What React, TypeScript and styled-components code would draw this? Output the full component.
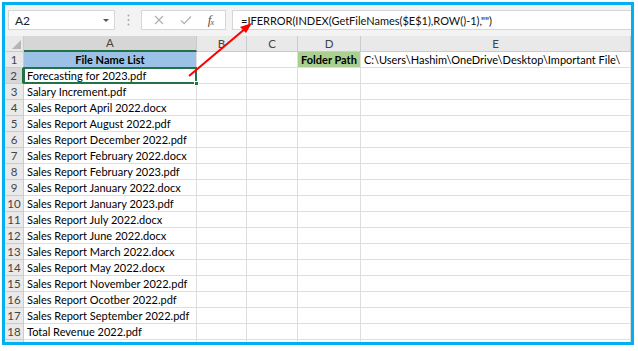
import React from "react";
import styled, { createGlobalStyle, css } from "styled-components";

const GlobalStyle = createGlobalStyle`
  html, body { margin: 0; padding: 0; background: #ffffff; }
  body { font-family: "Lato", "Liberation Sans", sans-serif; }
`;

const Frame = styled.div`
  position: relative;
  margin: 2px 0 0 2px;
  width: 632px;
  height: 343px;
  box-sizing: border-box;
  border: 3px solid #00b0f0;
  overflow: hidden;
  display: flex;
  flex-direction: column;
  background: #ffffff;
`;

const Toolbar = styled.div`
  height: 31px;
  flex: none;
  box-sizing: border-box;
  padding: 5px 0 0 3px;
  display: flex;
  align-items: flex-start;
  background: #f3f3f3;
`;

const Box = styled.div`
  height: 20px;
  box-sizing: border-box;
  background: #ffffff;
  border: 1px solid #d6d6d6;
  display: flex;
  align-items: center;
`;

const NameBox = styled(Box)`
  width: 107px;
  padding: 0 5px 0 6px;
  justify-content: space-between;
  font-size: 12px;
  color: #222;
`;

const Caret = styled.span`
  width: 0;
  height: 0;
  border-left: 3px solid transparent;
  border-right: 3px solid transparent;
  border-top: 3px solid #555;
`;

const Grip = styled.div`
  width: 26px;
  height: 20px;
  display: flex;
  align-items: center;
  justify-content: center;
`;

const ButtonsBox = styled(Box)`
  width: 85px;
  justify-content: space-around;
  padding: 0 4px;
`;

const Fx = styled.span`
  font-family: "Liberation Serif", serif;
  font-style: italic;
  font-size: 13px;
  color: #555;
  letter-spacing: -1px;
  sub {
    font-size: 8px;
    vertical-align: -1px;
  }
`;

const FormulaBox = styled(Box)`
  flex: 1;
  margin-left: 6px;
  padding-left: 8px;
  border-right: none;
  font-family: "Lato", "Liberation Sans", sans-serif;
  font-size: 11px;
  color: #111;
`;

const Sheet = styled.div`
  flex: 1;
  overflow: hidden;
  display: grid;
  grid-template-columns: 19px 173px 50px 51px 63px 270px;
  grid-auto-rows: 16px;
`;

type CellProps = {
  $kind?: "corner" | "colhead" | "rowhead" | "data";
  $active?: boolean;
  $fill?: string;
  $bold?: boolean;
  $center?: boolean;
  $selected?: boolean;
};

const Cell = styled.div<CellProps>`
  position: relative;
  box-sizing: border-box;
  border-right: 1px solid #dedede;
  border-bottom: 1px solid #dedede;
  font-size: 11px;
  line-height: 15px;
  color: #000;
  white-space: nowrap;
  overflow: visible;
  padding: 0 3px;
  background: ${(p) => p.$fill || "transparent"};
  font-weight: ${(p) => (p.$bold ? 700 : 400)};
  text-align: ${(p) => (p.$center ? "center" : "left")};

  ${(p) =>
    (p.$kind === "colhead" || p.$kind === "rowhead" || p.$kind === "corner") &&
    css`
      background: ${p.$active ? "#d6d6d6" : "#e9e9e9"};
      border-right-color: #cbcbcb;
      border-bottom-color: #cbcbcb;
      color: #444;
      text-align: center;
      padding: 0;
      font-size: 11.5px;
    `}

  ${(p) =>
    p.$kind === "colhead" &&
    p.$active &&
    css`
      border-bottom: 2px solid #217346;
      line-height: 14px;
    `}

  ${(p) =>
    p.$kind === "rowhead" &&
    p.$active &&
    css`
      border-right: 2px solid #217346;
    `}

  ${(p) =>
    p.$selected &&
    css`
      z-index: 2;
      &::after {
        content: "";
        position: absolute;
        left: -1px;
        top: -1px;
        right: -1px;
        bottom: -1px;
        border: 2px solid #217346;
        pointer-events: none;
      }
      &::before {
        content: "";
        position: absolute;
        right: -3px;
        bottom: -3px;
        width: 5px;
        height: 5px;
        background: #217346;
        border: 1px solid #fff;
        box-sizing: border-box;
        z-index: 3;
      }
    `}
`;

const CornerMark = styled.span`
  position: absolute;
  right: 2px;
  bottom: 2px;
  width: 0;
  height: 0;
  border-left: 9px solid transparent;
  border-bottom: 9px solid #b5b5b5;
`;

const Overlay = styled.svg`
  position: absolute;
  left: 0;
  top: 0;
  width: 100%;
  height: 100%;
  pointer-events: none;
  z-index: 10;
`;

const files = [
  "Forecasting for 2023.pdf",
  "Salary Increment.pdf",
  "Sales Report April 2022.docx",
  "Sales Report August 2022.pdf",
  "Sales Report December 2022.pdf",
  "Sales Report February 2022.docx",
  "Sales Report February 2023.pdf",
  "Sales Report January 2022.docx",
  "Sales Report January 2023.pdf",
  "Sales Report July 2022.docx",
  "Sales Report June 2022.docx",
  "Sales Report March 2022.docx",
  "Sales Report May 2022.docx",
  "Sales Report November 2022.pdf",
  "Sales Report Ocotber 2022.pdf",
  "Sales Report September 2022.pdf",
  "Total Revenue 2022.pdf",
];

const cols = ["A", "B", "C", "D", "E"];

export default function App() {
  const rows: React.ReactNode[] = [];
  for (let r = 1; r <= 19; r++) {
    rows.push(
      <Cell key={`h${r}`} $kind="rowhead" $active={r === 2}>
        {r <= 18 ? r : ""}
      </Cell>
    );
    if (r === 1) {
      rows.push(
        <Cell key="a1" $fill="#9bc2e6" $bold $center>
          File Name List
        </Cell>,
        <Cell key="b1" />,
        <Cell key="c1" />,
        <Cell key="d1" $fill="#a9d08e" $bold>
          Folder Path
        </Cell>,
        <Cell key="e1">C:\Users\Hashim\OneDrive\Desktop\Important File\</Cell>
      );
    } else {
      rows.push(
        <Cell key={`a${r}`} $selected={r === 2}>
          {files[r - 2] || ""}
        </Cell>,
        <Cell key={`b${r}`} />,
        <Cell key={`c${r}`} />,
        <Cell key={`d${r}`} />,
        <Cell key={`e${r}`} />
      );
    }
  }

  return (
    <>
      <GlobalStyle />
      <Frame>
        <Toolbar>
          <NameBox>
            <span>A2</span>
            <Caret />
          </NameBox>
          <Grip>
            <svg width="3" height="12" viewBox="0 0 3 12">
              <circle cx="1.5" cy="1.5" r="1" fill="#a8a8a8" />
              <circle cx="1.5" cy="6" r="1" fill="#a8a8a8" />
              <circle cx="1.5" cy="10.5" r="1" fill="#a8a8a8" />
            </svg>
          </Grip>
          <ButtonsBox>
            <svg width="10" height="10" viewBox="0 0 10 10">
              <path d="M1 1 L9 9 M9 1 L1 9" stroke="#b0b0b0" strokeWidth="1.2" fill="none" />
            </svg>
            <svg width="12" height="10" viewBox="0 0 12 10">
              <path d="M1 5.5 L4.2 8.7 L11 1.5" stroke="#b0b0b0" strokeWidth="1.2" fill="none" />
            </svg>
            <Fx>
              f<sub>x</sub>
            </Fx>
          </ButtonsBox>
          <FormulaBox>=IFERROR(INDEX(GetFileNames($E$1),ROW()-1),"")</FormulaBox>
        </Toolbar>
        <Sheet>
          <Cell $kind="corner">
            <CornerMark />
          </Cell>
          {cols.map((c) => (
            <Cell key={c} $kind="colhead" $active={c === "A"}>
              {c}
            </Cell>
          ))}
          {rows}
        </Sheet>
        <Overlay viewBox="0 0 626 337">
          <line x1="184" y1="71" x2="241" y2="23" stroke="#ff0000" strokeWidth="2" />
          <polygon points="247,18 235,22 241,28" fill="#ff0000" />
        </Overlay>
      </Frame>
    </>
  );
}
